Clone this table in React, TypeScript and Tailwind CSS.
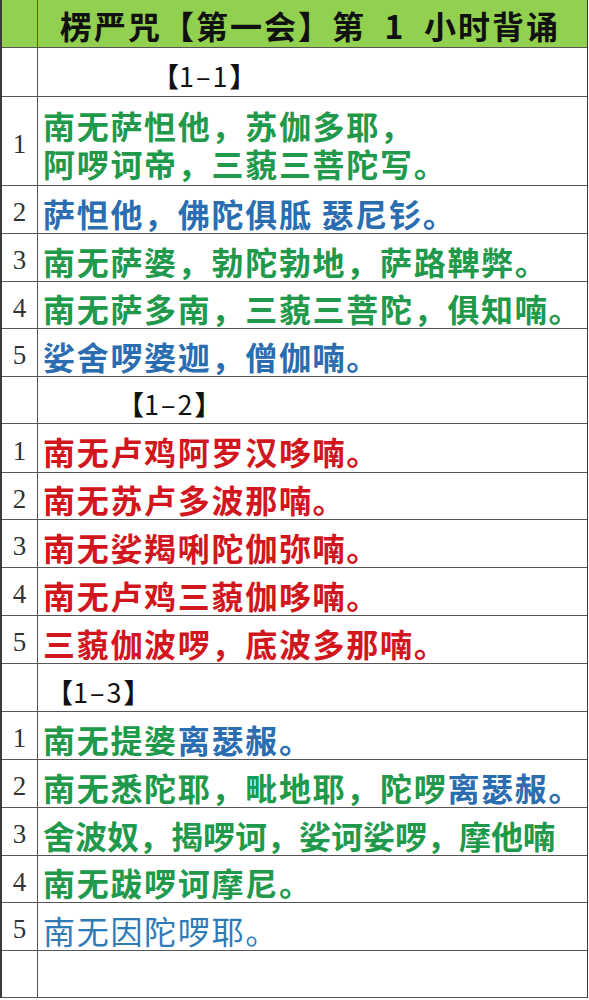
import React from "react";

const GREEN = "text-[#20994a]";
const BLUE = "text-[#2a6db0]";
const RED = "text-[#d2161e]";

type Seg = { t: string; c: string };

interface Row {
  h: string;
  n?: string;
  label?: string;
  pad?: string;
  lines?: Seg[][];
  light?: boolean;
  tight?: boolean;
}

const g = (t: string): Seg => ({ t, c: GREEN });
const b = (t: string): Seg => ({ t, c: BLUE });
const r = (t: string): Seg => ({ t, c: RED });

const ROWS: Row[] = [
  { h: "h-[49px]", label: "1–1", pad: "pl-[114px]" },
  { h: "h-[89px]", n: "1", lines: [[g("南无萨怛他，苏伽多耶，")], [g("阿啰诃帝，三藐三菩陀写。")]] },
  { h: "h-[48px]", n: "2", lines: [[b("萨怛他，佛陀俱胝 瑟尼钐。")]] },
  { h: "h-[48px]", n: "3", lines: [[g("南无萨婆，勃陀勃地，萨路鞞弊。")]] },
  { h: "h-[47px]", n: "4", lines: [[g("南无萨多南，三藐三菩陀，俱知喃。")]] },
  { h: "h-[48px]", n: "5", lines: [[b("娑舍啰婆迦，僧伽喃。")]] },
  { h: "h-[47px]", label: "1–2", pad: "pl-[79px]" },
  { h: "h-[49px]", n: "1", lines: [[r("南无卢鸡阿罗汉哆喃。")]] },
  { h: "h-[47px]", n: "2", lines: [[r("南无苏卢多波那喃。")]] },
  { h: "h-[48px]", n: "3", lines: [[r("南无娑羯唎陀伽弥喃。")]] },
  { h: "h-[48px]", n: "4", lines: [[r("南无卢鸡三藐伽哆喃。")]] },
  { h: "h-[48px]", n: "5", lines: [[r("三藐伽波啰，底波多那喃。")]] },
  { h: "h-[48px]", label: "1–3", pad: "pl-[8px]" },
  { h: "h-[48px]", n: "1", lines: [[g("南无提婆"), b("离瑟赧。")]] },
  { h: "h-[48px]", n: "2", lines: [[g("南无悉陀耶，毗地耶，陀啰"), b("离瑟赧。")]] },
  { h: "h-[48px]", n: "3", lines: [[g("舍波奴，揭啰诃，娑诃娑啰，摩他喃")]], tight: true },
  { h: "h-[47px]", n: "4", lines: [[g("南无跋啰诃摩尼。")]] },
  { h: "h-[48px]", n: "5", lines: [[b("南无因陀啰耶。")]], light: true },
  { h: "h-[47px]" },
];

const cjk = "font-['Noto_Sans_CJK_SC',sans-serif]";

export default function App() {
  return (
    <div className="w-[589px] h-[1000px] bg-white overflow-hidden">
      <div className="w-[588px] border-l-2 border-r border-[#3a3a3a]">
        <div className="flex h-[48px] bg-[#92d050] border-b border-[#555]">
          <div className="w-[36px] shrink-0 border-r border-[#555]" />
          <div className={`flex-1 flex items-center pl-[22px] pt-[3px] text-[32px] leading-none font-bold tracking-[2px] text-[#111] whitespace-pre ${cjk}`}>
            楞严咒【第一会】第  1  小时背诵
          </div>
        </div>

        {ROWS.map((row, i) => (
          <div key={i} className={`flex ${row.h} border-b border-[#555]`}>
            <div className="w-[36px] shrink-0 border-r border-[#555] flex items-center justify-center pt-[6px] font-['Liberation_Serif',serif] text-[27px] leading-none text-[#333]">
              {row.n}
            </div>
            {row.label ? (
              <div className={`flex-1 flex items-center ${row.pad} pt-[7px] text-[27px] leading-none text-[#111] ${cjk}`}>
                <span className="font-bold">【</span>
                <span className="tracking-[2px]">{row.label}</span>
                <span className="font-bold">】</span>
              </div>
            ) : (
              <div
                className={`flex-1 flex flex-col justify-center pl-[5px] pt-[6px] text-[32px] leading-[38px] whitespace-pre ${
                  row.tight ? "tracking-[0px]" : "tracking-[1.7px]"
                } ${row.light ? "font-normal" : "font-bold"} ${cjk}`}
              >
                {row.lines?.map((line, j) => (
                  <div key={j}>
                    {line.map((s, k) => (
                      <span key={k} className={row.light ? "text-[#2f7bb8]" : s.c}>
                        {s.t}
                      </span>
                    ))}
                  </div>
                ))}
              </div>
            )}
          </div>
        ))}
      </div>
    </div>
  );
}
